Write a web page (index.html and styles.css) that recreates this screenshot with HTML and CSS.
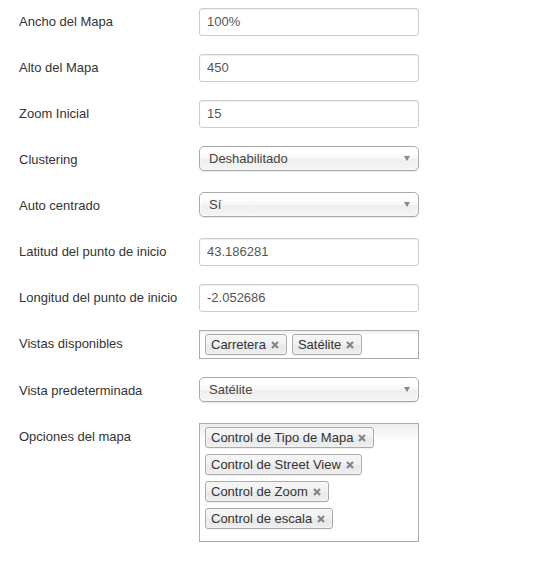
FILE: index.html
```
<!DOCTYPE html>
<html lang="es">
<head>
<meta charset="utf-8">
<title>Opciones del mapa</title>
<link rel="stylesheet" href="styles.css">
</head>
<body>
<form class="form">
  <div class="row">
    <label class="label">Ancho del Mapa</label>
    <div class="input">100%</div>
  </div>
  <div class="row">
    <label class="label">Alto del Mapa</label>
    <div class="input">450</div>
  </div>
  <div class="row">
    <label class="label">Zoom Inicial</label>
    <div class="input">15</div>
  </div>
  <div class="row">
    <label class="label">Clustering</label>
    <div class="select"><span>Deshabilitado</span><i class="arrow"></i></div>
  </div>
  <div class="row">
    <label class="label">Auto centrado</label>
    <div class="select"><span>Sí</span><i class="arrow"></i></div>
  </div>
  <div class="row">
    <label class="label">Latitud del punto de inicio</label>
    <div class="input">43.186281</div>
  </div>
  <div class="row">
    <label class="label">Longitud del punto de inicio</label>
    <div class="input">-2.052686</div>
  </div>
  <div class="row">
    <label class="label">Vistas disponibles</label>
    <ul class="multi">
      <li class="chip">Carretera<svg class="x" viewBox="0 0 8 8"><path d="M1 1L7 7M7 1L1 7"/></svg></li>
      <li class="chip">Satélite<svg class="x" viewBox="0 0 8 8"><path d="M1 1L7 7M7 1L1 7"/></svg></li>
    </ul>
  </div>
  <div class="row">
    <label class="label">Vista predeterminada</label>
    <div class="select"><span>Satélite</span><i class="arrow"></i></div>
  </div>
  <div class="row">
    <label class="label">Opciones del mapa</label>
    <ul class="multi multi-tall">
      <li class="chip">Control de Tipo de Mapa<svg class="x" viewBox="0 0 8 8"><path d="M1 1L7 7M7 1L1 7"/></svg></li>
      <li class="chip">Control de Street View<svg class="x" viewBox="0 0 8 8"><path d="M1 1L7 7M7 1L1 7"/></svg></li>
      <li class="chip">Control de Zoom<svg class="x" viewBox="0 0 8 8"><path d="M1 1L7 7M7 1L1 7"/></svg></li>
      <li class="chip">Control de escala<svg class="x" viewBox="0 0 8 8"><path d="M1 1L7 7M7 1L1 7"/></svg></li>
    </ul>
  </div>
</form>
</body>
</html>
```
FILE: styles.css
```
html, body {
  margin: 0;
  padding: 0;
  background: #fff;
}
body {
  font-family: "Liberation Sans", Arial, Helvetica, sans-serif;
  font-size: 13px;
  color: #333;
}
.form {
  padding: 8px 0 0 19px;
}
.row {
  display: flex;
  align-items: flex-start;
  min-height: 28px;
  margin-bottom: 18px;
}
.label {
  width: 180px;
  flex: none;
  padding-top: 5px;
  line-height: 18px;
  color: #333;
}
.input {
  box-sizing: border-box;
  width: 220px;
  height: 28px;
  padding: 4px 7px;
  line-height: 18px;
  color: #555;
  border: 1px solid #ccc;
  border-radius: 3px;
  box-shadow: inset 0 1px 1px rgba(0,0,0,0.075);
}
.select {
  box-sizing: border-box;
  width: 220px;
  height: 25px;
  padding: 0 8px 0 9px;
  display: flex;
  align-items: center;
  justify-content: space-between;
  color: #444;
  border: 1px solid #aaa;
  border-radius: 5px;
  background: linear-gradient(#fff 20%, #f6f6f6 50%, #eee 52%, #f4f4f4 100%);
  box-shadow: inset 0 0 3px #fff, 0 1px 1px rgba(0,0,0,0.1);
}
.arrow {
  width: 0;
  height: 0;
  border-left: 3.5px solid transparent;
  border-right: 3.5px solid transparent;
  border-top: 5px solid #888;
}
.multi {
  box-sizing: border-box;
  width: 220px;
  margin: 0;
  padding: 0 5px;
  list-style: none;
  display: flex;
  flex-wrap: wrap;
  align-content: flex-start;
  border: 1px solid #aaa;
  background: linear-gradient(#eee 1%, #fff 15%);
}
.multi-tall {
  padding-bottom: 9px;
}
.chip {
  position: relative;
  margin: 3px 5px 3px 0;
  padding: 3px 20px 3px 5px;
  line-height: 13px;
  color: #333;
  border: 1px solid #aaa;
  border-radius: 3px;
  background: linear-gradient(#f4f4f4 20%, #f0f0f0 50%, #e8e8e8 52%, #eee 100%);
  box-shadow: inset 0 0 2px #fff, 0 1px 0 rgba(0,0,0,0.05);
}
.x {
  position: absolute;
  right: 7px;
  top: 6px;
  width: 8px;
  height: 8px;
  stroke: #858585;
  stroke-width: 2.2;
  fill: none;
}
```
